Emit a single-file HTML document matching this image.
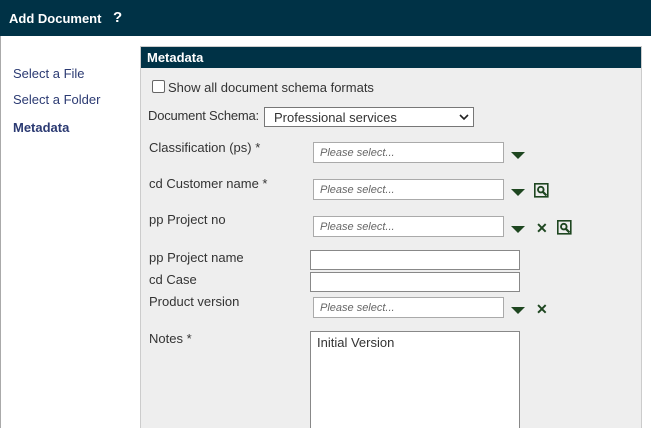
<!DOCTYPE html>
<html style="width:651px;height:428px;overflow:hidden"><head><meta charset="utf-8"><style>
*{box-sizing:border-box;margin:0;padding:0}
body{width:651px;height:428px;overflow:hidden;background:#fff;font-family:"Liberation Sans",Arial,sans-serif;font-size:13px;color:#333;position:relative}
.top{position:absolute;left:0;top:0;width:651px;height:36px;background:#003246;color:#fff;font-weight:bold;font-size:13px}
.top span{position:absolute;top:11px}
.lb{position:absolute;left:0;top:36px;width:1px;height:392px;background:#aaa}
.nav{position:absolute;left:13px;color:#2b3a72}
.panel{position:absolute;left:140px;top:46px;width:502px;height:382px;background:#eee;border:1px solid #ccc;border-bottom:none}
.ph{position:absolute;left:0;top:0;width:500px;height:21px;background:#003246;color:#fff;font-weight:bold;padding:3px 0 0 6px;font-size:13px}
.a{position:absolute}
.sel{position:absolute;left:313px;width:191px;height:21px;background:#fff;border:1px solid #aaa;font-style:italic;font-size:11px;color:#666;padding:4px 0 0 6px}
.txt{position:absolute;left:310px;width:210px;height:20px;background:#fff;border:1px solid #888}
.arr{position:absolute;left:511px;width:0;height:0;border-left:7px solid transparent;border-right:7px solid transparent;border-top:7px solid #1e4620}
.x{position:absolute;color:#1e4620;font-weight:bold;font-size:14px}
</style></head><body>
<div class="top"><span style="left:9px">Add Document</span><span style="left:113px;font-size:15px;top:9px">?</span></div>
<div class="lb"></div>
<div class="nav" style="top:66px">Select a File</div>
<div class="nav" style="top:92px">Select a Folder</div>
<div class="nav" style="top:120px;font-weight:bold">Metadata</div>
<div class="panel"><div class="ph">Metadata</div></div>
<div class="a" style="left:152px;top:80px;width:13px;height:13px;border:1px solid #666;border-radius:2px;background:#fff"></div>
<div class="a" style="left:168px;top:80px">Show all document schema formats</div>
<div class="a" style="left:148px;top:108px;letter-spacing:-0.2px">Document Schema:</div>
<div class="a" style="left:264px;top:107px;width:210px;height:20px;background:#fff;border:1px solid #777;padding:2px 0 0 9px">Professional services
<svg style="position:absolute;right:4px;top:5px" width="10" height="8"><path d="M1 2L5 6L9 2" stroke="#222" stroke-width="1.6" fill="none"/></svg></div>
<div class="a" style="left:149px;top:140px">Classification (ps) *</div>
<div class="sel" style="top:142px">Please select...</div><div class="arr" style="top:152px"></div>
<div class="a" style="left:149px;top:176px">cd Customer name *</div>
<div class="sel" style="top:179px">Please select...</div><div class="arr" style="top:189px"></div>
<svg class="a" style="left:534px;top:183px" width="16" height="16"><rect x="0.8" y="0.8" width="13" height="13" fill="none" stroke="#1e4620" stroke-width="1.6"/><circle cx="6.8" cy="6.6" r="2.8" fill="none" stroke="#1e4620" stroke-width="1.9"/><path d="M8.8 8.8L12.5 12.5" stroke="#1e4620" stroke-width="2.2"/></svg>
<div class="a" style="left:149px;top:212px">pp Project no</div>
<div class="sel" style="top:216px">Please select...</div><div class="arr" style="top:226px"></div>
<div class="x" style="left:536px;top:220px">✕</div>
<svg class="a" style="left:557px;top:220px" width="16" height="16"><rect x="0.8" y="0.8" width="13" height="13" fill="none" stroke="#1e4620" stroke-width="1.6"/><circle cx="6.8" cy="6.6" r="2.8" fill="none" stroke="#1e4620" stroke-width="1.9"/><path d="M8.8 8.8L12.5 12.5" stroke="#1e4620" stroke-width="2.2"/></svg>
<div class="a" style="left:149px;top:250px">pp Project name</div>
<div class="txt" style="top:250px"></div>
<div class="a" style="left:149px;top:272px">cd Case</div>
<div class="txt" style="top:272px"></div>
<div class="a" style="left:149px;top:294px">Product version</div>
<div class="sel" style="top:297px">Please select...</div><div class="arr" style="top:307px"></div>
<div class="x" style="left:536px;top:301px">✕</div>
<div class="a" style="left:149px;top:331px">Notes *</div>
<div class="a" style="left:310px;top:331px;width:210px;height:97px;background:#fff;border:1px solid #888;border-bottom:none;padding:3px 0 0 6px">Initial Version</div>
</body></html>
